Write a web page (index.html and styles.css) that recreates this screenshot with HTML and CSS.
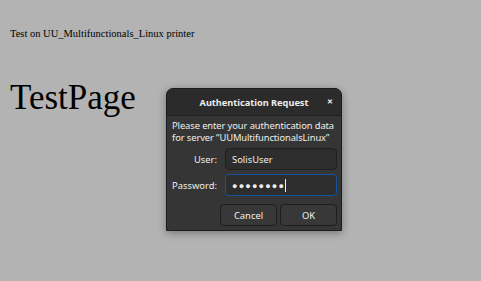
FILE: index.html
```html
<!DOCTYPE html>
<html lang="en">
<head>
    <meta charset="UTF-8">
    <title>TestPage</title>
    <link rel="stylesheet" href="styles.css">
</head>
<body>
    <div class="page">
        <p class="caption">Test on UU_Multifunctionals_Linux printer</p>
        <h1 class="title">TestPage</h1>
    </div>

    <!-- auth dialog floats over the page -->
    <div class="dialog">
        <div class="dialog-header">
            <span class="dialog-title">Authentication Request</span>
            <span class="dialog-close">&#x2715;</span>
        </div>
        <div class="dialog-body">
            <div class="message">Please enter your authentication data<br>for server “UUMultifunctionalsLinux”</div>
            <div class="form">
                <label class="label">User:</label>
                <div class="field">SolisUser</div>
                <label class="label">Password:</label>
                <div class="field focused"><span class="dots">&#x25CF;&#x25CF;&#x25CF;&#x25CF;&#x25CF;&#x25CF;&#x25CF;&#x25CF;</span><span class="caret"></span></div>
            </div>
            <div class="buttons">
                <button class="btn">Cancel</button>
                <button class="btn">OK</button>
            </div>
        </div>
    </div>
</body>
</html>
```

FILE: styles.css
```css
body {
    margin: 0;
    background: #b3b3b3;
    font-family: 'Liberation Serif', serif;
    color: #000;
    width: 481px;
    height: 281px;
    overflow: hidden;
}

.page {
    padding: 28px 10px 0;
}

.caption {
    margin: 0;
    font-size: 10.5px;
}

.title {
    margin: 41px 0 0;
    font-size: 35px;
    font-weight: normal;
    line-height: 1;
}

.dialog {
    position: absolute;
    left: 166px;
    top: 88px;
    width: 174px;
    background: #353535;
    border: 1px solid #1c1c1c;
    border-radius: 7px 7px 0 0;
    box-shadow: 0 2px 8px rgba(0, 0, 0, 0.35);
    font-family: 'Noto Sans', sans-serif;
    color: #eeeeec;
    font-size: 9.4px;
    white-space: nowrap;
}

.dialog-header {
    height: 26px;
    background: #2b2b2b;
    border-bottom: 1px solid #1f1f1f;
    border-radius: 6px 6px 0 0;
    display: flex;
    align-items: center;
    justify-content: center;
    position: relative;
}

.dialog-title {
    font-weight: bold;
    font-size: 9.2px;
}

.dialog-close {
    position: absolute;
    right: 8px;
    top: 8px;
    font-size: 7px;
    font-weight: bold;
}

.dialog-body {
    padding: 4px 4px 4px 5px;
}

.message {
    line-height: 12px;
    letter-spacing: -0.1px;
}

.form {
    display: grid;
    grid-template-columns: auto 112px;
    column-gap: 8px;
    row-gap: 4px;
    align-items: center;
    margin-top: 4px;
}

.label {
    text-align: right;
}

.field {
    height: 20px;
    border: 1px solid #1f1f1f;
    border-radius: 4px;
    background: #2d2d2d;
    display: flex;
    align-items: center;
    padding: 0 6px;
}

.field.focused {
    border-color: #15539e;
}

.dots {
    font-size: 9px;
    letter-spacing: 1.2px;
}

.caret {
    width: 1px;
    height: 13px;
    margin-left: 0;
    background: #eeeeec;
}

.buttons {
    display: flex;
    justify-content: flex-end;
    gap: 3px;
    margin-top: 8px;
}

.btn {
    width: 57px;
    height: 22px;
    border: 1px solid #1e1e1e;
    border-radius: 4px;
    background: #383838;
    color: #eeeeec;
    font-family: 'Noto Sans', sans-serif;
    font-size: 9.4px;
}
```
